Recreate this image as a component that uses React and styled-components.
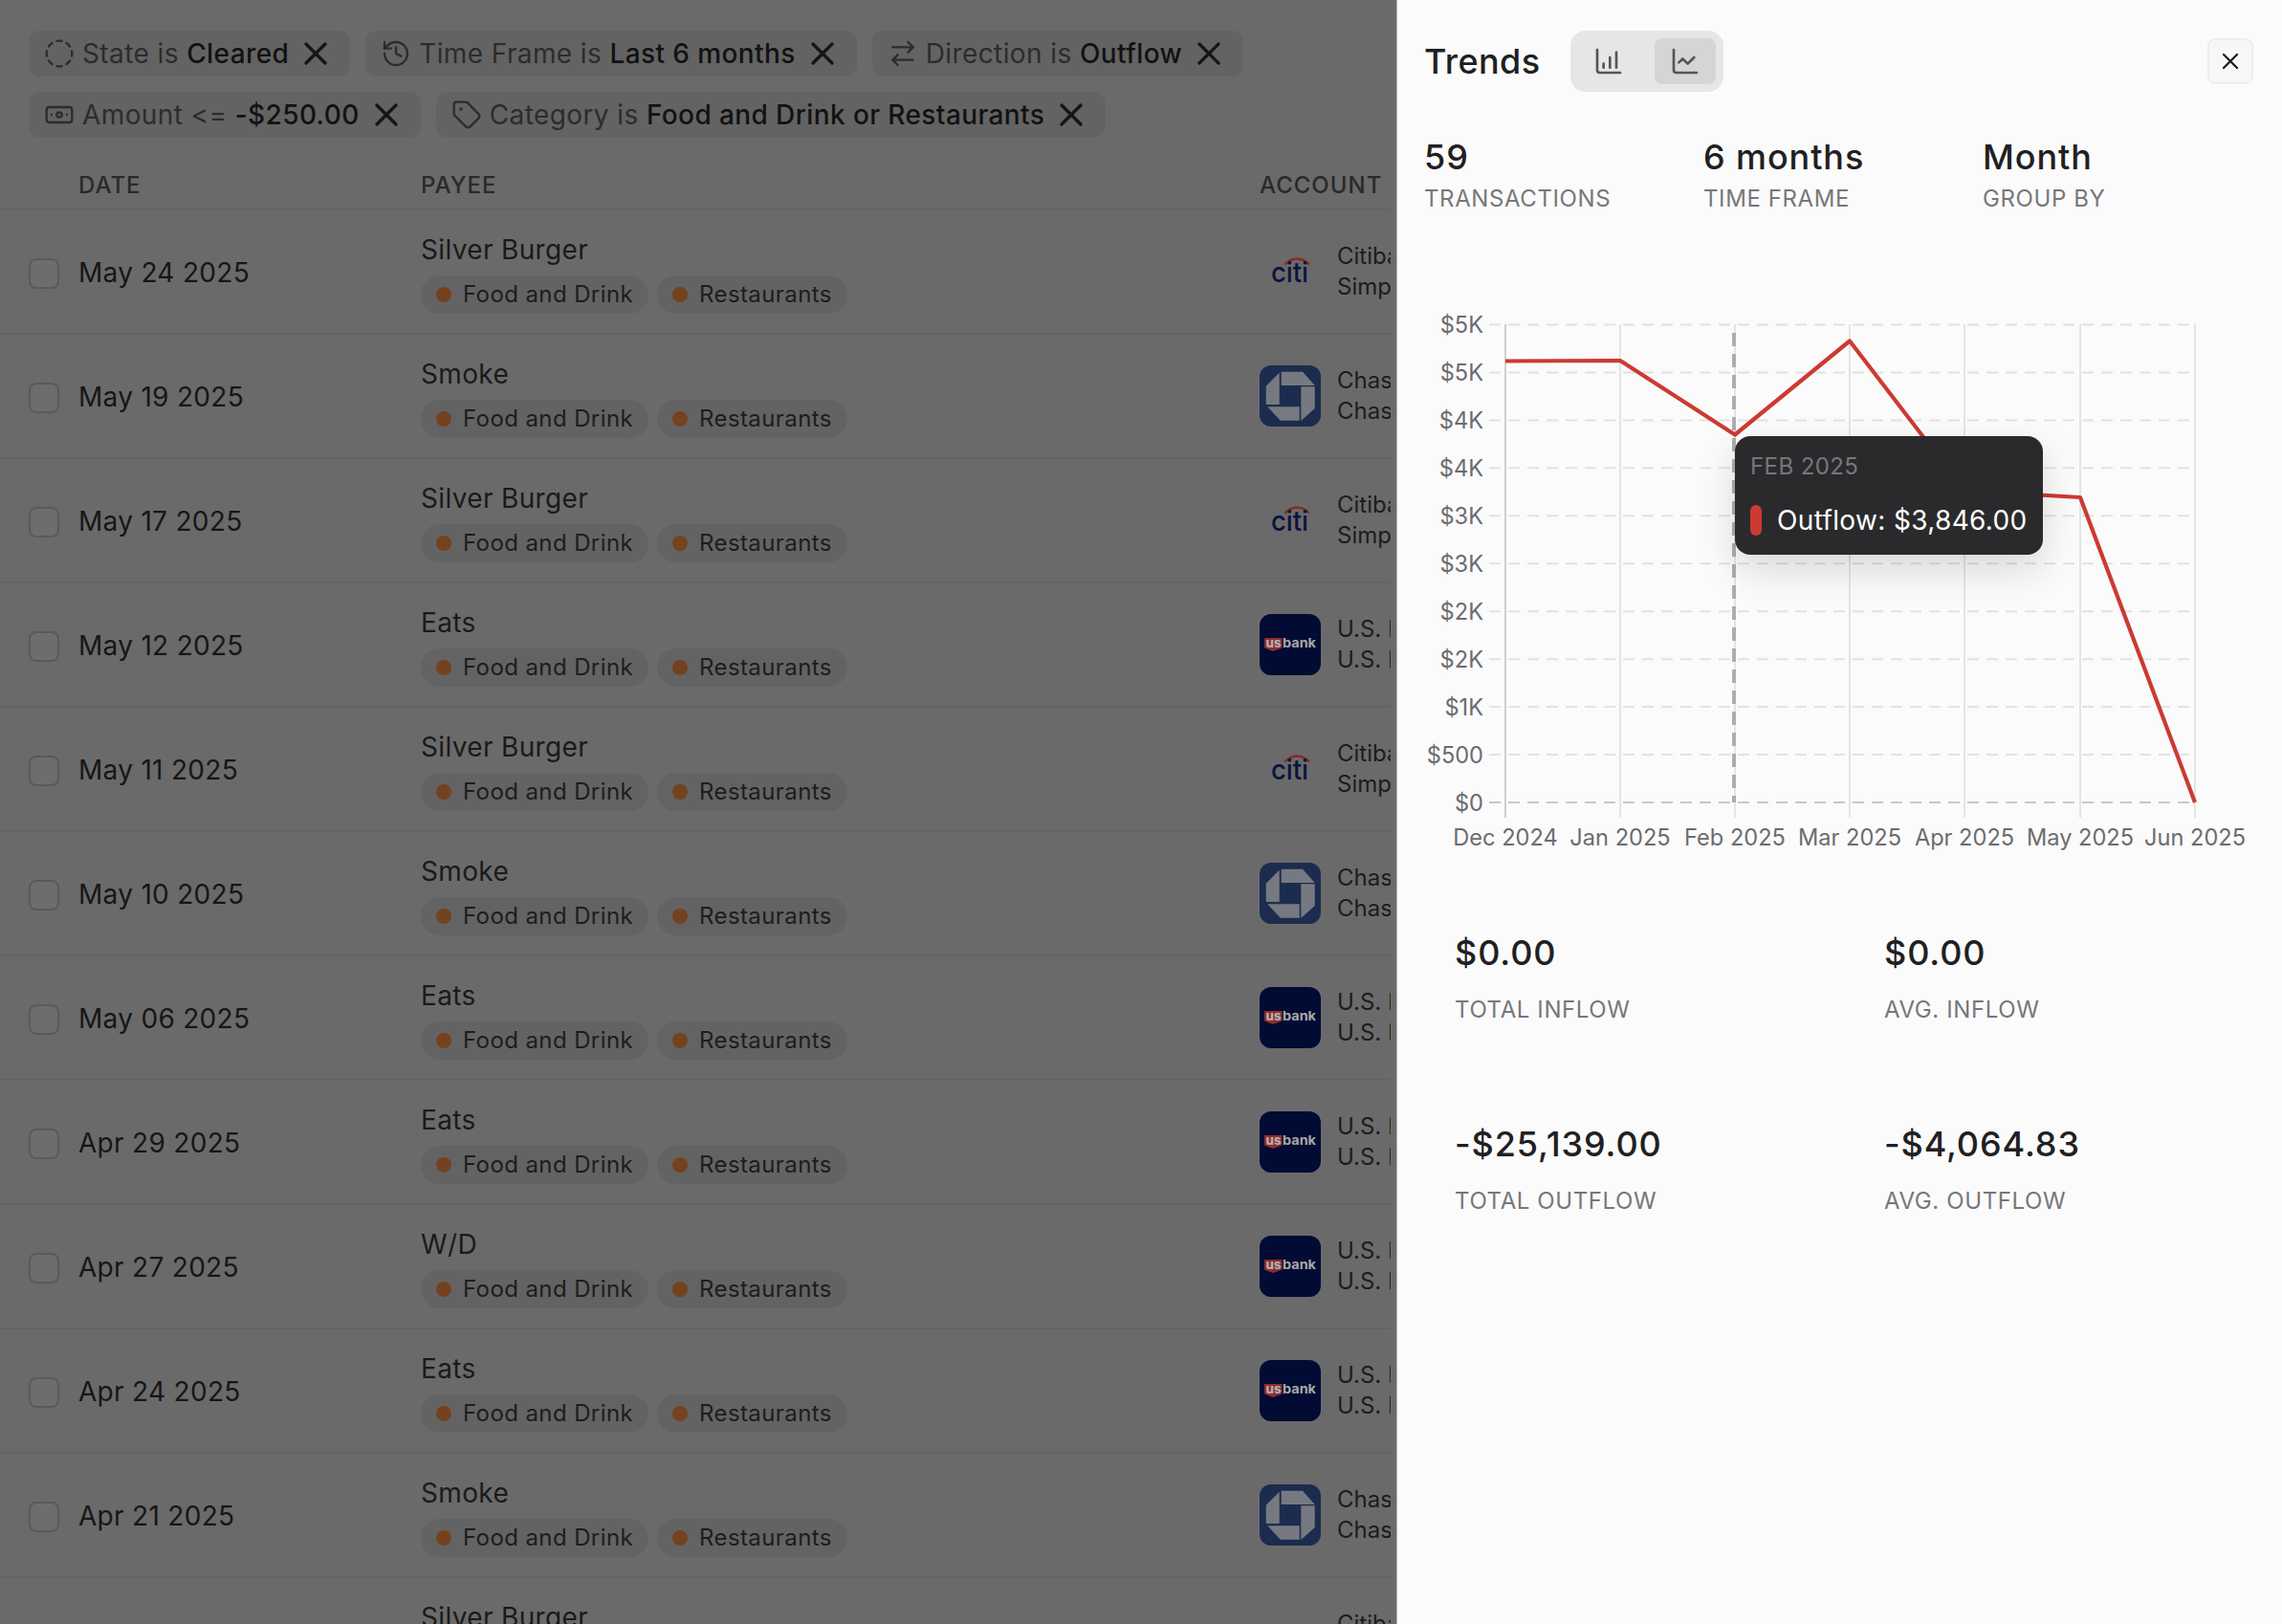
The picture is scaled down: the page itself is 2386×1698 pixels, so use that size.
import React from 'react';
import styled, { createGlobalStyle } from 'styled-components';
import { CircleDashed, History, ArrowRightLeft, Banknote, Tag, X, ChartColumnIncreasing, ChartLine } from 'lucide-react';

const Global = createGlobalStyle`
  html, body { margin: 0; padding: 0; background: #6a6a6a; }
  body { font-family: Inter, "Noto Sans", sans-serif; overflow: hidden; -webkit-font-smoothing: antialiased; }
  * { box-sizing: border-box; }
`;

const Page = styled.div`
  display: flex;
  width: 2386px;
  height: 1698px;
  overflow: hidden;
`;

/* ---------- dimmed list ---------- */
const Main = styled.main`
  flex: 0 0 1460px;
  background: #6a6a6a;
  padding-right: 6px;
  overflow: hidden;
`;
const FilterBar = styled.div`
  display: flex;
  flex-wrap: wrap;
  gap: 16px;
  padding: 32px 30px 0;
  height: 164px;
  align-content: flex-start;
`;
const FilterChip = styled.div`
  display: flex;
  align-items: center;
  height: 48px;
  padding: 0 16px;
  gap: 8px;
  border-radius: 12px;
  background: #636363;
  color: #2c2c2c;
  font-size: 28px;
  letter-spacing: 0.4px;
  white-space: nowrap;
  svg { flex: none; }
`;
const ChipValue = styled.b`
  font-weight: 500;
  color: #121212;
`;
const ChipClose = styled.span`
  display: flex;
  margin-left: 0;
  color: #161616;
`;
const TableHead = styled.div`
  display: grid;
  grid-template-columns: 358px 877px 1fr;
  width: 1454px;
  height: 56px;
  padding: 4px 0 0 82px;
  align-items: center;
  border-bottom: 2px solid #646464;
  color: #2a2a2a;
  font-size: 24px;
  font-weight: 500;
  letter-spacing: 1px;
`;
const Row = styled.div`
  display: grid;
  grid-template-columns: 52px 358px 877px 137px;
  width: 1454px;
  height: 130px;
  padding-left: 30px;
  align-items: center;
  border-bottom: 2px solid #646464;
  overflow: hidden;
`;
const Check = styled.span`
  display: block;
  width: 32px;
  height: 32px;
  margin-top: 4px;
  border-radius: 8px;
  border: 2px solid #5a5a5a;
  background: #6d6d6d;
`;
const DateText = styled.span`
  margin-top: 2px;
  font-size: 28px;
  letter-spacing: 0.3px;
  color: #161616;
`;
const Payee = styled.div`
  display: flex;
  flex-direction: column;
  gap: 10px;
  margin-top: 3px;
  font-size: 28px;
  letter-spacing: 0.35px;
  color: #1a1a1a;
`;
const PayeeName = styled.span`
  line-height: 34px;
`;
const Tags = styled.div`
  display: flex;
  gap: 9px;
`;
const CatTag = styled.span`
  display: flex;
  align-items: center;
  gap: 12px;
  height: 40px;
  padding: 0 16px;
  border-radius: 20px;
  background: #636363;
  color: #1d1d1d;
  font-size: 24px;
  letter-spacing: 0.4px;
`;
const Dot = styled.i`
  width: 16px;
  height: 16px;
  border-radius: 50%;
  background: #74421f;
`;
const Account = styled.div`
  display: flex;
  align-items: center;
  gap: 17px;
  overflow: hidden;
`;
const BankLogo = styled.svg`
  flex: none;
  width: 64px;
  height: 64px;
`;
const AccountLines = styled.div`
  font-size: 24px;
  line-height: 32px;
  color: #1c1c1c;
  white-space: nowrap;
`;

/* ---------- trends panel ---------- */
const Panel = styled.aside`
  flex: 0 0 926px;
  background: #fbfbfb;
  border-left: 1px solid #b0b0b0;
`;
const PanelHead = styled.header`
  display: flex;
  align-items: center;
  padding: 32px 30px 0 28px;
  height: 96px;
`;
const Title = styled.h2`
  margin: 0 31px 0 0;
  font-size: 36px;
  font-weight: 500;
  color: #202022;
  letter-spacing: 0.4px;
`;
const Toggle = styled.div`
  display: flex;
  gap: 16px;
  padding: 8px;
  height: 64px;
  border-radius: 16px;
  background: #e6e6e6;
`;
const ToggleBtn = styled.span`
  display: flex;
  align-items: center;
  justify-content: center;
  width: 64px;
  height: 48px;
  border-radius: 8px;
  color: #555558;
  background: ${p => (p.$active ? '#d5d4d6' : 'transparent')};
`;
const CloseBtn = styled.span`
  display: flex;
  align-items: center;
  justify-content: center;
  width: 48px;
  height: 48px;
  margin-left: auto;
  border-radius: 8px;
  border: 2px solid #eeeeee;
  background: #f7f7f7;
  color: #1d1d1f;
`;
const Summary = styled.div`
  display: grid;
  grid-template-columns: repeat(3, 292px);
  padding: 46px 0 0 28px;
`;
const Stat = styled.div`
  display: flex;
  flex-direction: column;
  gap: ${p => p.$gap || 6}px;
`;
const StatValue = styled.span`
  font-size: 36px;
  line-height: 44px;
  font-weight: 500;
  letter-spacing: 0.9px;
  color: #202022;
`;
const StatLabel = styled.span`
  font-size: 24px;
  line-height: 32px;
  color: #77777a;
  letter-spacing: 0.6px;
`;
const ChartWrap = styled.div`
  position: relative;
  width: 925px;
  height: 580px;
  margin-top: 96px;
`;
const ChartSvg = styled.svg`
  display: block;
  font-family: Inter, sans-serif;
`;
const Tooltip = styled.div`
  position: absolute;
  left: 353px;
  top: 136px;
  width: 322px;
  height: 124px;
  padding: 16px 16px 0;
  border-radius: 16px;
  background: #2a2a2c;
  box-shadow: 0 16px 40px rgba(0, 0, 0, 0.14);
`;
const TipDate = styled.div`
  font-size: 24px;
  line-height: 32px;
  color: #77777a;
  letter-spacing: 0.4px;
`;
const TipRow = styled.div`
  display: flex;
  align-items: center;
  gap: 16px;
  margin-top: 24px;
  color: #fff;
  font-size: 28px;
  line-height: 32px;
  letter-spacing: 0.35px;
  white-space: nowrap;
`;
const TipMark = styled.i`
  width: 12px;
  height: 32px;
  border-radius: 6px;
  background: #cc3a32;
`;
const Totals = styled.div`
  display: grid;
  grid-template-columns: 449px 1fr;
  row-gap: 102px;
  padding: 74px 0 0 60px;
`;

/* ---------- logos ---------- */
const CitiLogo = () => (
  <BankLogo viewBox="0 0 64 64">
    <path d="M26.5 24.5 Q39 12.5 52 24.5" fill="none" stroke="#8a2a1c" strokeWidth="2.2" />
    <text x="12" y="43" fontFamily="Inter, sans-serif" fontSize="29" fontWeight="500" fill="#0a1440" textLength="39" lengthAdjust="spacingAndGlyphs">citi</text>
  </BankLogo>
);
const ChaseLogo = () => (
  <BankLogo viewBox="0 0 64 64">
    <rect width="64" height="64" rx="12" fill="#1c2c4e" />
    <g fill="#767a80">
      <polygon points="22.7,6.7 45,6.7 57.7,21 22.7,21" />
      <polygon points="43.3,22.3 57.7,22.3 57.7,45 43.3,58" />
      <polygon points="8.3,43.3 41.7,43.3 41.7,57.7 21.7,57.7" />
      <polygon points="6.7,21.7 20.7,7.7 20.7,41 6.7,41" />
    </g>
  </BankLogo>
);
const UsBankLogo = () => (
  <BankLogo viewBox="0 0 64 64">
    <rect width="64" height="64" rx="12" fill="#020b33" />
    <path d="M5 25 H23.5 V35.5 L14 39 L5 35.5 Z" fill="#8f2c2c" />
    <text x="6.5" y="35" fontFamily="Inter, sans-serif" fontSize="13" fontWeight="800" fill="#b0b0b0" textLength="16" lengthAdjust="spacingAndGlyphs">us</text>
    <text x="24" y="35" fontFamily="Inter, sans-serif" fontSize="13.5" fontWeight="700" fill="#a8a8a8" textLength="35" lengthAdjust="spacingAndGlyphs">bank</text>
  </BankLogo>
);

const banks = {
  citi: { Logo: CitiLogo, lines: ['Citibank', 'Simplicity'] },
  chase: { Logo: ChaseLogo, lines: ['Chase', 'Chase Freedom'] },
  us: { Logo: UsBankLogo, lines: ['U.S. Bank', 'U.S. Bank Altitude'] },
};

const rows = [
  ['May 24 2025', 'Silver Burger', 'citi'],
  ['May 19 2025', 'Smoke', 'chase'],
  ['May 17 2025', 'Silver Burger', 'citi'],
  ['May 12 2025', 'Eats', 'us'],
  ['May 11 2025', 'Silver Burger', 'citi'],
  ['May 10 2025', 'Smoke', 'chase'],
  ['May 06 2025', 'Eats', 'us'],
  ['Apr 29 2025', 'Eats', 'us'],
  ['Apr 27 2025', 'W/D', 'us'],
  ['Apr 24 2025', 'Eats', 'us'],
  ['Apr 21 2025', 'Smoke', 'chase'],
  ['Apr 19 2025', 'Silver Burger', 'citi'],
];

const filters = [
  [CircleDashed, 'State is', 'Cleared'],
  [History, 'Time Frame is', 'Last 6 months'],
  [ArrowRightLeft, 'Direction is', 'Outflow'],
  [Banknote, 'Amount <=', '-$250.00'],
  [Tag, 'Category is', 'Food and Drink or Restaurants'],
];

/* chart coordinates, relative to the chart box */
const xs = [113, 233, 353, 473, 593, 714, 834];
const months = ['Dec 2024', 'Jan 2025', 'Feb 2025', 'Mar 2025', 'Apr 2025', 'May 2025', 'Jun 2025'];
const yLabels = ['$5K', '$5K', '$4K', '$4K', '$3K', '$3K', '$2K', '$2K', '$1K', '$500', '$0'];
const ys = yLabels.map((_, i) => 19.5 + i * 49.95);
const line = [377.5, 377, 454.5, 356.5, 513, 520, 839].map(y => y - 320);

const Chart = () => (
  <ChartSvg width="925" height="580" viewBox="0 0 925 580">
    {xs.map((x, i) => (
      <line key={x} x1={x} x2={x} y1="19" y2="535" stroke={i === 0 ? '#cfcfcf' : '#e4e4e4'} strokeWidth="2" />
    ))}
    {ys.map((y, i) => (
      <line key={i} x1="96" x2="834" y1={y} y2={y} stroke={i === 10 ? '#c8c8c8' : '#e2e2e2'} strokeWidth="2" strokeDasharray="12 8" />
    ))}
    <line x1="352" x2="352" y1="28" y2="519" stroke="#adadad" strokeWidth="4" strokeDasharray="14 8" />
    <polyline points={xs.map((x, i) => `${x},${line[i]}`).join(' ')} fill="none" stroke="#cc3a32" strokeWidth="4.2" strokeLinejoin="round" />
    {yLabels.map((t, i) => (
      <text key={i} x="90" y={ys[i] + 8.5} textAnchor="end" fontSize="23.6" fill="#6c6c6e">{t}</text>
    ))}
    {months.map((t, i) => (
      <text key={t} x={xs[i]} y="564" textAnchor="middle" fontSize="23.6" fill="#6c6c6e">{t}</text>
    ))}
  </ChartSvg>
);

export default function App() {
  return (
    <Page>
      <Global />
      <Main>
        <FilterBar>
          {filters.map(([Icon, label, value]) => (
            <FilterChip key={label}>
              <Icon size={32} strokeWidth={1.75} color="#2c2c2c" />
              <span>{label} <ChipValue>{value}</ChipValue></span>
              <ChipClose><X size={40} strokeWidth={2} /></ChipClose>
            </FilterChip>
          ))}
        </FilterBar>
        <TableHead><span>DATE</span><span>PAYEE</span><span>ACCOUNT</span></TableHead>
        {rows.map(([date, payee, bank], i) => {
          const { Logo, lines } = banks[bank];
          return (
            <Row key={i}>
              <Check />
              <DateText>{date}</DateText>
              <Payee>
                <PayeeName>{payee}</PayeeName>
                <Tags>
                  <CatTag><Dot />Food and Drink</CatTag>
                  <CatTag><Dot />Restaurants</CatTag>
                </Tags>
              </Payee>
              <Account>
                <Logo />
                <AccountLines>{lines[0]}<br />{lines[1]}</AccountLines>
              </Account>
            </Row>
          );
        })}
      </Main>
      <Panel>
        <PanelHead>
          <Title>Trends</Title>
          <Toggle>
            <ToggleBtn><ChartColumnIncreasing size={32} strokeWidth={2} /></ToggleBtn>
            <ToggleBtn $active><ChartLine size={32} strokeWidth={2} /></ToggleBtn>
          </Toggle>
          <CloseBtn><X size={28} strokeWidth={2} /></CloseBtn>
        </PanelHead>
        <Summary>
          <Stat><StatValue>59</StatValue><StatLabel>TRANSACTIONS</StatLabel></Stat>
          <Stat><StatValue>6 months</StatValue><StatLabel>TIME FRAME</StatLabel></Stat>
          <Stat><StatValue>Month</StatValue><StatLabel>GROUP BY</StatLabel></Stat>
        </Summary>
        <ChartWrap>
          <Chart />
          <Tooltip>
            <TipDate>FEB 2025</TipDate>
            <TipRow><TipMark />Outflow: $3,846.00</TipRow>
          </Tooltip>
        </ChartWrap>
        <Totals>
          <Stat $gap={22}><StatValue>$0.00</StatValue><StatLabel>TOTAL INFLOW</StatLabel></Stat>
          <Stat $gap={22}><StatValue>$0.00</StatValue><StatLabel>AVG. INFLOW</StatLabel></Stat>
          <Stat $gap={22}><StatValue>-$25,139.00</StatValue><StatLabel>TOTAL OUTFLOW</StatLabel></Stat>
          <Stat $gap={22}><StatValue>-$4,064.83</StatValue><StatLabel>AVG. OUTFLOW</StatLabel></Stat>
        </Totals>
      </Panel>
    </Page>
  );
}
